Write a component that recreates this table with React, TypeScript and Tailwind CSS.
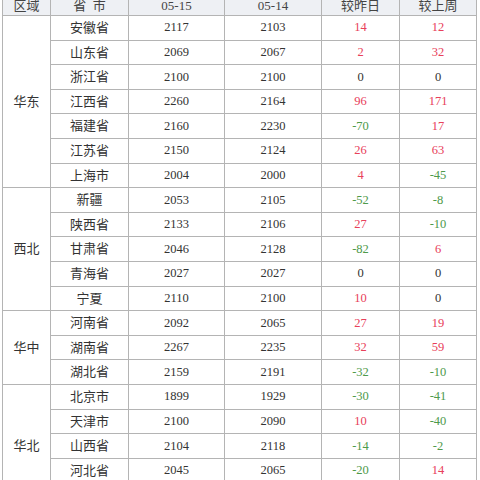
import React from "react";

type Row = [string, string, string, number, number];
const groups: { region: string; rows: Row[] }[] = [
  {
    region: "华东",
    rows: [
      ["安徽省", "2117", "2103", 14, 12],
      ["山东省", "2069", "2067", 2, 32],
      ["浙江省", "2100", "2100", 0, 0],
      ["江西省", "2260", "2164", 96, 171],
      ["福建省", "2160", "2230", -70, 17],
      ["江苏省", "2150", "2124", 26, 63],
      ["上海市", "2004", "2000", 4, -45],
    ],
  },
  {
    region: "西北",
    rows: [
      ["新疆", "2053", "2105", -52, -8],
      ["陕西省", "2133", "2106", 27, -10],
      ["甘肃省", "2046", "2128", -82, 6],
      ["青海省", "2027", "2027", 0, 0],
      ["宁夏", "2110", "2100", 10, 0],
    ],
  },
  {
    region: "华中",
    rows: [
      ["河南省", "2092", "2065", 27, 19],
      ["湖南省", "2267", "2235", 32, 59],
      ["湖北省", "2159", "2191", -32, -10],
    ],
  },
  {
    region: "华北",
    rows: [
      ["北京市", "1899", "1929", -30, -41],
      ["天津市", "2100", "2090", 10, -40],
      ["山西省", "2104", "2118", -14, -2],
      ["河北省", "2045", "2065", -20, 14],
      ["内蒙古", "2080", "2080", 0, 0],
    ],
  },
];

const FONT = { fontFamily: '"Liberation Serif","Noto Sans CJK SC",serif' };

function Diff({ v }: { v: number }) {
  const cls =
    v > 0 ? "text-[#e8405a]" : v < 0 ? "text-[#4e9a4a]" : "text-[#333333]";
  return (
    <div className={`bg-white flex items-center justify-center text-[12.5px] ${cls}`}>
      {v}
    </div>
  );
}

export default function App() {
  let rowIdx = 2;
  return (
    <div className="w-[480px] h-[480px] overflow-hidden bg-white" style={FONT}>
      <div className="ml-[2px] -mt-[5px] w-[475px] bg-[#b4b4b4] p-px">
        <div className="grid grid-cols-[47px_77px_95px_96px_77px_76px] grid-rows-[19px] auto-rows-[23.6px] gap-px text-[#333333]">
          {["区域", "省 市", "05-15", "05-14", "较昨日", "较上周"].map((h) => (
            <div
              key={h}
              className="bg-[#eef0f4] flex items-center justify-center text-[13px] whitespace-pre text-[#444444]"
            >
              {h === "省 市" ? "省  市" : h}
            </div>
          ))}
          {groups.map((g) => {
            const start = rowIdx;
            rowIdx += g.rows.length;
            return (
              <React.Fragment key={g.region}>
                <div
                  className="bg-white flex items-center justify-center text-[13px] col-start-1"
                  style={{ gridRow: `${start} / span ${g.rows.length}` }}
                >
                  {g.region}
                </div>
                {g.rows.map((r) => (
                  <React.Fragment key={r[0]}>
                    <div className="bg-white flex items-center justify-center text-[13px] col-start-2">
                      {r[0]}
                    </div>
                    <div className="bg-white flex items-center justify-center text-[12.5px]">
                      {r[1]}
                    </div>
                    <div className="bg-white flex items-center justify-center text-[12.5px]">
                      {r[2]}
                    </div>
                    <Diff v={r[3]} />
                    <Diff v={r[4]} />
                  </React.Fragment>
                ))}
              </React.Fragment>
            );
          })}
        </div>
      </div>
    </div>
  );
}
